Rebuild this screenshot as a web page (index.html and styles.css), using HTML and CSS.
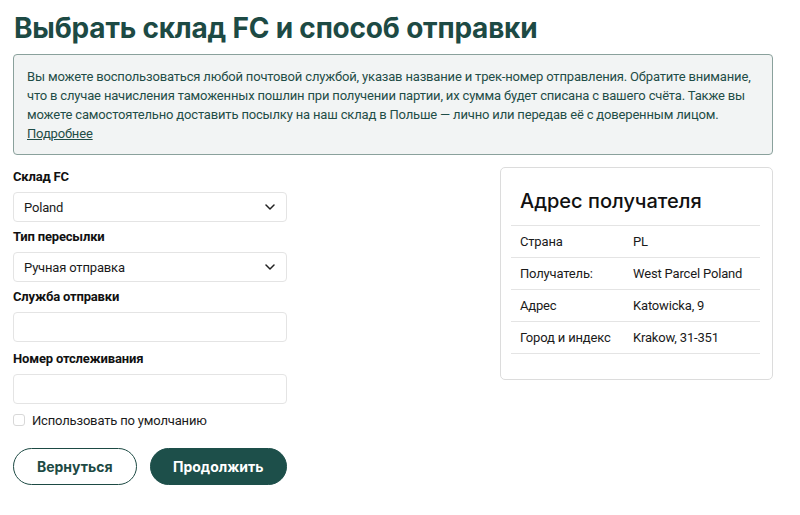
FILE: index.html
```html
<!DOCTYPE html>
<html lang="ru">
<head>
<meta charset="utf-8">
<title>Выбрать склад FC и способ отправки</title>
<link rel="stylesheet" href="styles.css">
</head>
<body>
<main class="page">
  <h1 class="title">Выбрать склад FC и способ отправки</h1>
  <div class="notice">
    <p>Вы можете воспользоваться любой почтовой службой, указав название и трек-номер отправления. Обратите внимание, что в случае начисления таможенных пошлин при получении партии, их сумма будет списана с вашего счёта. Также вы можете самостоятельно доставить посылку на наш склад в Польше — лично или передав её с доверенным лицом.</p>
    <a class="more" href="#">Подробнее</a>
  </div>
  <div class="columns">
    <form class="form">
      <label class="label">Склад FC</label>
      <div class="select">
        <span>Poland</span>
        <svg class="chev" width="10" height="6" viewBox="0 0 10 6"><path d="M1 1l4 4 4-4" fill="none" stroke="#222" stroke-width="1.5" stroke-linecap="round" stroke-linejoin="round"/></svg>
      </div>
      <label class="label">Тип пересылки</label>
      <div class="select">
        <span>Ручная отправка</span>
        <svg class="chev" width="10" height="6" viewBox="0 0 10 6"><path d="M1 1l4 4 4-4" fill="none" stroke="#222" stroke-width="1.5" stroke-linecap="round" stroke-linejoin="round"/></svg>
      </div>
      <label class="label">Служба отправки</label>
      <div class="input"></div>
      <label class="label">Номер отслеживания</label>
      <div class="input"></div>
      <div class="check">
        <span class="box"></span>
        <span>Использовать по умолчанию</span>
      </div>
      <div class="buttons">
        <button type="button" class="btn btn-outline">Вернуться</button>
        <button type="button" class="btn btn-primary">Продолжить</button>
      </div>
    </form>
    <aside class="card">
      <h2 class="card-title">Адрес получателя</h2>
      <table class="addr">
        <tr><td>Страна</td><td>PL</td></tr>
        <tr><td>Получатель:</td><td>West Parcel Poland</td></tr>
        <tr><td>Адрес</td><td>Katowicka, 9</td></tr>
        <tr><td>Город и индекс</td><td>Krakow, 31-351</td></tr>
      </table>
    </aside>
  </div>
</main>
</body>
</html>
```
FILE: styles.css
```css
* { box-sizing: border-box; }
html, body { margin: 0; background: #fff; }
body {
  font-family: Roboto, "Liberation Sans", sans-serif;
  color: #1a1a1a;
  font-size: 13px;
  letter-spacing: -0.17px;
}
.page { padding: 0 27px 0 13px; }
.title {
  margin: 0;
  padding-top: 10px;
  height: 54px;
  font-family: Inter, "Noto Sans", sans-serif;
  font-size: 28px;
  line-height: 36px;
  font-weight: 700;
  color: #1d4a44;
  letter-spacing: -0.2px;
  padding-left: 1px;
}
.notice {
  border: 1px solid #8aa19c;
  background: #f2f4f4;
  border-radius: 4px;
  padding: 12px 10px 11px 13px;
  color: #1f4d47;
  font-size: 13px;
  line-height: 19px;
}
.notice p { margin: 0; }
.more { color: #1f4d47; text-decoration: underline; }
.columns {
  display: flex;
  justify-content: space-between;
  align-items: flex-start;
  margin-top: 13px;
}
.form { width: 274px; display: flex; flex-direction: column; }
.label {
  font-weight: 700;
  font-size: 13px;
  line-height: 16px;
  margin: 2px 0 7px;
  color: #111;
}
.label:first-child { margin-top: 1px; }
.select, .input {
  height: 30px;
  border: 1px solid #e4e4e4;
  border-radius: 4px;
  margin-bottom: 5px;
  display: flex;
  align-items: center;
  justify-content: space-between;
  padding: 0 11px 0 10px;
  font-size: 13px;
}
.input { margin-bottom: 6px; }
.input + .label { margin-top: 3px; }
.chev { display: block; }
.check {
  display: flex;
  align-items: center;
  gap: 7px;
  margin-top: 1px;
  height: 18px;
}
.box {
  width: 12px; height: 12px;
  border: 1px solid #d8d8d8;
  border-radius: 3px;
}
.buttons { display: flex; gap: 13px; margin-top: 19px; }
.btn {
  height: 37px;
  border-radius: 19px;
  font-family: Inter, "Noto Sans", sans-serif;
  font-size: 14px;
  font-weight: 700;
  letter-spacing: 0;
  padding: 0;
}
.btn-outline {
  width: 124px;
  background: #fff;
  border: 1px solid #1d4a44;
  color: #1d4a44;
}
.btn-primary {
  width: 138px;
  background: #1d4f4a;
  border: 1px solid #1d4f4a;
  color: #fff;
}
.card {
  width: 273px;
  border: 1px solid #dcdcdc;
  border-radius: 5px;
  padding: 14px 12px 25px 10px;
  margin-top: -1px;
}
.card-title {
  margin: 0;
  padding: 5px 9px 0;
  font-family: Inter, "Noto Sans", sans-serif;
  font-size: 20px;
  line-height: 28px;
  font-weight: 500;
  letter-spacing: 0;
  height: 43px;
  color: #111;
}
.addr {
  width: 100%;
  table-layout: fixed;
  border-collapse: collapse;
  border-top: 1px solid #e4e4e4;
}
.addr td {
  height: 32px;
  padding: 0 9px;
  border-bottom: 1px solid #e4e4e4;
  font-size: 13px;
  color: #1a1a1a;
  white-space: nowrap;
}
.addr td:first-child { width: 113px; }
```
